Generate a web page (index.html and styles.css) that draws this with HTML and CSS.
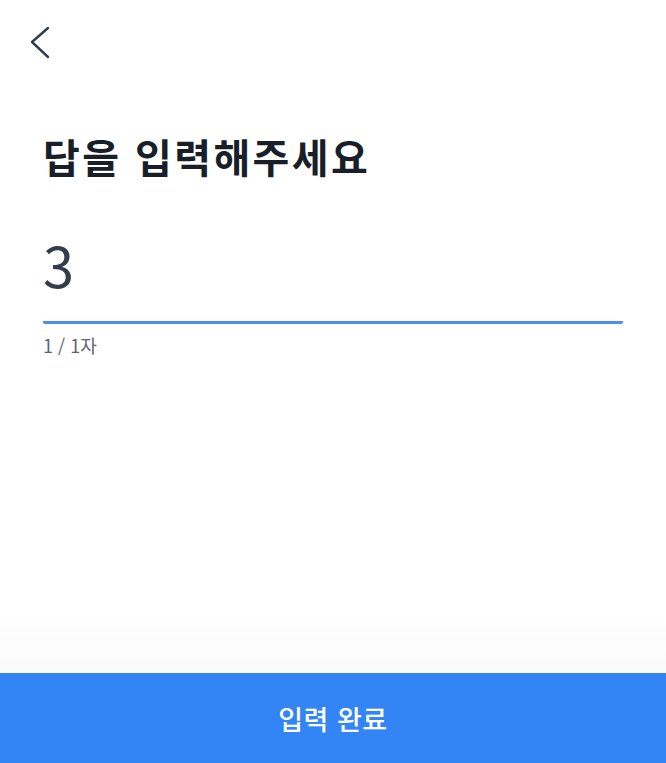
FILE: index.html
```html
<!DOCTYPE html>
<html lang="ko">
<head>
  <meta charset="UTF-8" />
  <meta name="viewport" content="width=device-width, initial-scale=1" />
  <title>답 입력</title>
  <link rel="stylesheet" href="styles.css">
</head>
<body>
  <div class="screen">
    <header class="topbar">
      <button class="back-btn" aria-label="뒤로 가기">
        <svg width="20" height="33" viewBox="0 0 20 33">
          <polyline points="18,2 2,16 18,31" fill="none" stroke="#333d4b" stroke-width="2.4" stroke-linecap="round" stroke-linejoin="round" />
        </svg>
      </button>
    </header>

    <main class="content">
      <h1 class="title">답을 입력해주세요</h1>
      <div class="answer-field">
        <input type="text" class="answer-input" value="3" maxlength="1" aria-label="답" />
      </div>
      <div class="counter">1 / 1자</div>
    </main>

    <div class="bottom-fade"></div>
    <button class="submit-btn">입력 완료</button>
  </div>
</body>
</html>
```

FILE: styles.css
```css
* {
  box-sizing: border-box;
}
body {
  margin: 0;
  padding: 0;
  background: #ffffff;
  font-family: "Noto Sans CJK KR", "Noto Sans", sans-serif;
  color: #191f28;
}
.screen {
  height: 763px;
  display: flex;
  flex-direction: column;
}
.topbar {
  height: 88px;
  padding: 26px 0 0 30px;
}
.back-btn {
  border: none;
  background: transparent;
  padding: 0;
  cursor: pointer;
  display: block;
}
.content {
  flex-grow: 1;
  padding: 0 43px;
}
.title {
  margin: 42px 0 0;
  font-size: 40px;
  font-weight: 700;
  line-height: 1.3;
  letter-spacing: 2.4px;
  color: #191f28;
}
.answer-field {
  margin-top: 48px;
  border-bottom: 3px solid #4a8ef2;
  border-radius: 2px;
}
.answer-input {
  width: 100%;
  border: none;
  outline: none;
  padding: 0 0 24px;
  font-family: "Noto Sans CJK KR", "Noto Sans", sans-serif;
  font-size: 56px;
  font-weight: 400;
  line-height: 1.2;
  color: #333d4b;
  background: transparent;
}
.counter {
  margin-top: 8px;
  font-size: 18px;
  color: #5c6570;
}
.bottom-fade {
  height: 62px;
  background: linear-gradient(to bottom, #ffffff, #fafafa);
}
.submit-btn {
  height: 90px;
  border: none;
  background: #3385f6;
  color: #ffffff;
  font-family: "Noto Sans CJK KR", "Noto Sans", sans-serif;
  font-size: 27px;
  font-weight: 500;
  letter-spacing: 0.5px;
  cursor: pointer;
}
```
